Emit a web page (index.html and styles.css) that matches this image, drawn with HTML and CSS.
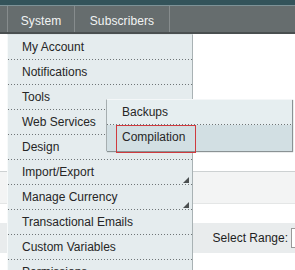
FILE: index.html
```html
<!DOCTYPE html>
<html>
    <head>
        <meta charset="UTF-8">
        <title>System menu</title>
        <link rel="stylesheet" href="styles.css">
    </head>
    <body>
        <div class="header-strip"></div>
        <div class="nav">
            <div class="nav-item nav-system">System</div>
            <div class="nav-item nav-subs">Subscribers</div>
        </div>
        <div class="page">
            <div class="band-head"></div>
            <div class="band-range">
                <span class="range-label">Select Range:</span>
                <span class="range-box"></span>
            </div>

            <ul class="menu">
                <li>My Account</li>
                <li>Notifications</li>
                <li class="has-sub">Tools
                    <ul class="submenu">
                        <li>Backups</li>
                        <li class="active">Compilation</li>
                        <div class="marker"></div>
                    </ul>
                </li>
                <li>Web Services</li>
                <li>Design</li>
                <li>Import/Export<span class="arrow"></span></li>
                <li>Manage Currency<span class="arrow"></span></li>
                <li>Transactional Emails</li>
                <li>Custom Variables</li>
                <li>Permissions</li>
            </ul>
        </div>
    </body>
</html>
```

FILE: styles.css
```css
body {
    margin: 0;
    font-family: "Liberation Sans", Arial, sans-serif;
    font-size: 12px;
    background: #fff;
    overflow: hidden;
}
.header-strip {
    height: 5px;
    background: #33535a;
    border-bottom: 1px solid #7d9297;
}
.nav {
    display: flex;
    height: 26px;
    padding-left: 7px;
    background: #666d6e;
    border-bottom: 2px solid #4a4f50;
}
.nav-item {
    height: 26px;
    overflow: hidden;
    color: #f2f4f4;
    line-height: 31px;
    text-align: center;
    border-left: 1px solid #868c8d;
    letter-spacing: 0.1px;
}
.nav-system {
    width: 66px;
}
.nav-subs {
    width: 94px;
    border-right: 1px solid #868c8d;
}
.page {
    position: relative;
    height: 236px;
    padding-top: 137px;
    box-sizing: border-box;
}
.band-head {
    height: 31px;
    background: #f3f4f4;
    border-top: 1px solid #cdd1d2;
    border-bottom: 1px solid #e4e6e6;
}
.band-range {
    margin-top: 19px;
    height: 30px;
    background: #e9eced;
    display: flex;
    align-items: center;
    justify-content: flex-end;
    color: #1e1e1e;
}
.range-label {
    margin-right: 3px;
}
.range-box {
    width: 3px;
    height: 18px;
    background: #fff;
    border: 1px solid #999;
    border-right: none;
}
.menu {
    position: absolute;
    left: 7px;
    top: 0;
    width: 184px;
    margin: 0;
    padding: 0;
    list-style: none;
    background: #e5ecee;
    border-top: 1px solid #dde5e7;
    border-left: 1px solid #f7fafa;
    border-right: 1px solid #a9b2b4;
}
.menu li {
    position: relative;
    height: 24px;
    line-height: 25px;
    padding-left: 14px;
    color: #262626;
}
.menu li::after {
    content: "";
    position: absolute;
    left: 0;
    right: 0;
    bottom: -1px;
    height: 1px;
    background: repeating-linear-gradient(to right, #6f7577 0 1px, transparent 1px 3px);
}
.menu > li {
    margin-bottom: 1px;
}
.arrow {
    position: absolute;
    right: 3px;
    bottom: 1px;
    width: 0;
    height: 0;
    border-left: 6px solid transparent;
    border-bottom: 6px solid #4b4f50;
}
.submenu {
    position: absolute;
    left: 98px;
    top: 14px;
    width: 185px;
    margin: 0;
    padding: 0;
    list-style: none;
    background: #e6eef0;
    border-left: 1px solid #a6aeb0;
    border-top: 1px solid #f4f7f8;
    box-shadow: 1px 1px 1px #8a9294;
    z-index: 2;
}
.submenu li {
    height: 25px;
    padding-left: 15px;
    line-height: 25px;
}
.submenu li::after {
    bottom: 0;
}
.submenu li.active {
    height: 26px;
    background: #d2dfe3;
}
.submenu li.active::after {
    display: none;
}
.marker {
    position: absolute;
    left: 9px;
    top: 25px;
    width: 78px;
    height: 26px;
    border: 1px solid #cf3a3e;
}
```
